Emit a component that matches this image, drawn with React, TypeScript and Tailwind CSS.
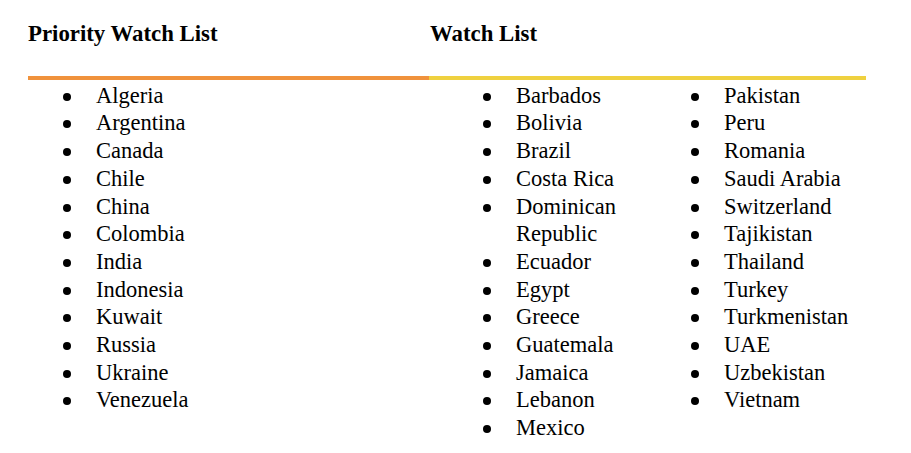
import React from "react";

const priority = ["Algeria","Argentina","Canada","Chile","China","Colombia","India","Indonesia","Kuwait","Russia","Ukraine","Venezuela"];
const watchA = ["Barbados","Bolivia","Brazil","Costa Rica","Dominican Republic","Ecuador","Egypt","Greece","Guatemala","Jamaica","Lebanon","Mexico"];
const watchB = ["Pakistan","Peru","Romania","Saudi Arabia","Switzerland","Tajikistan","Thailand","Turkey","Turkmenistan","UAE","Uzbekistan","Vietnam"];

function Item({ name }: { name: string }) {
  return (
    <li className="flex items-start">
      <span className="mt-[11px] h-[8px] w-[8px] shrink-0 rounded-full bg-black" />
      <span className="ml-[25px]">{name}</span>
    </li>
  );
}

export default function App() {
  return (
    <div
      className="h-[453px] w-[911px] overflow-hidden bg-white text-black text-[22.5px] leading-[27.7px]"
      style={{ fontFamily: '"Liberation Serif", "Times New Roman", serif' }}
    >
      <div className="ml-[28px] w-[838px] pt-[20px]">
        <div className="flex font-bold text-[22.8px]">
          <div className="w-[402px]">Priority Watch List</div>
          <div>Watch List</div>
        </div>
        <div className="mt-[28px] flex h-[4px]">
          <div className="w-[401px] bg-[#f0923c]" />
          <div className="flex-1 bg-[#efd13f]" />
        </div>
        <div className="mt-[2px] flex">
          <ul className="w-[401px] pl-[35px]">
            {priority.map((n) => (
              <Item key={n} name={n} />
            ))}
          </ul>
          <div className="flex pl-[54px]">
            <ul className="w-[208px]">
              {watchA.map((n) => (
                <Item key={n} name={n} />
              ))}
            </ul>
            <ul className="w-[175px]">
              {watchB.map((n) => (
                <Item key={n} name={n} />
              ))}
            </ul>
          </div>
        </div>
      </div>
    </div>
  );
}
